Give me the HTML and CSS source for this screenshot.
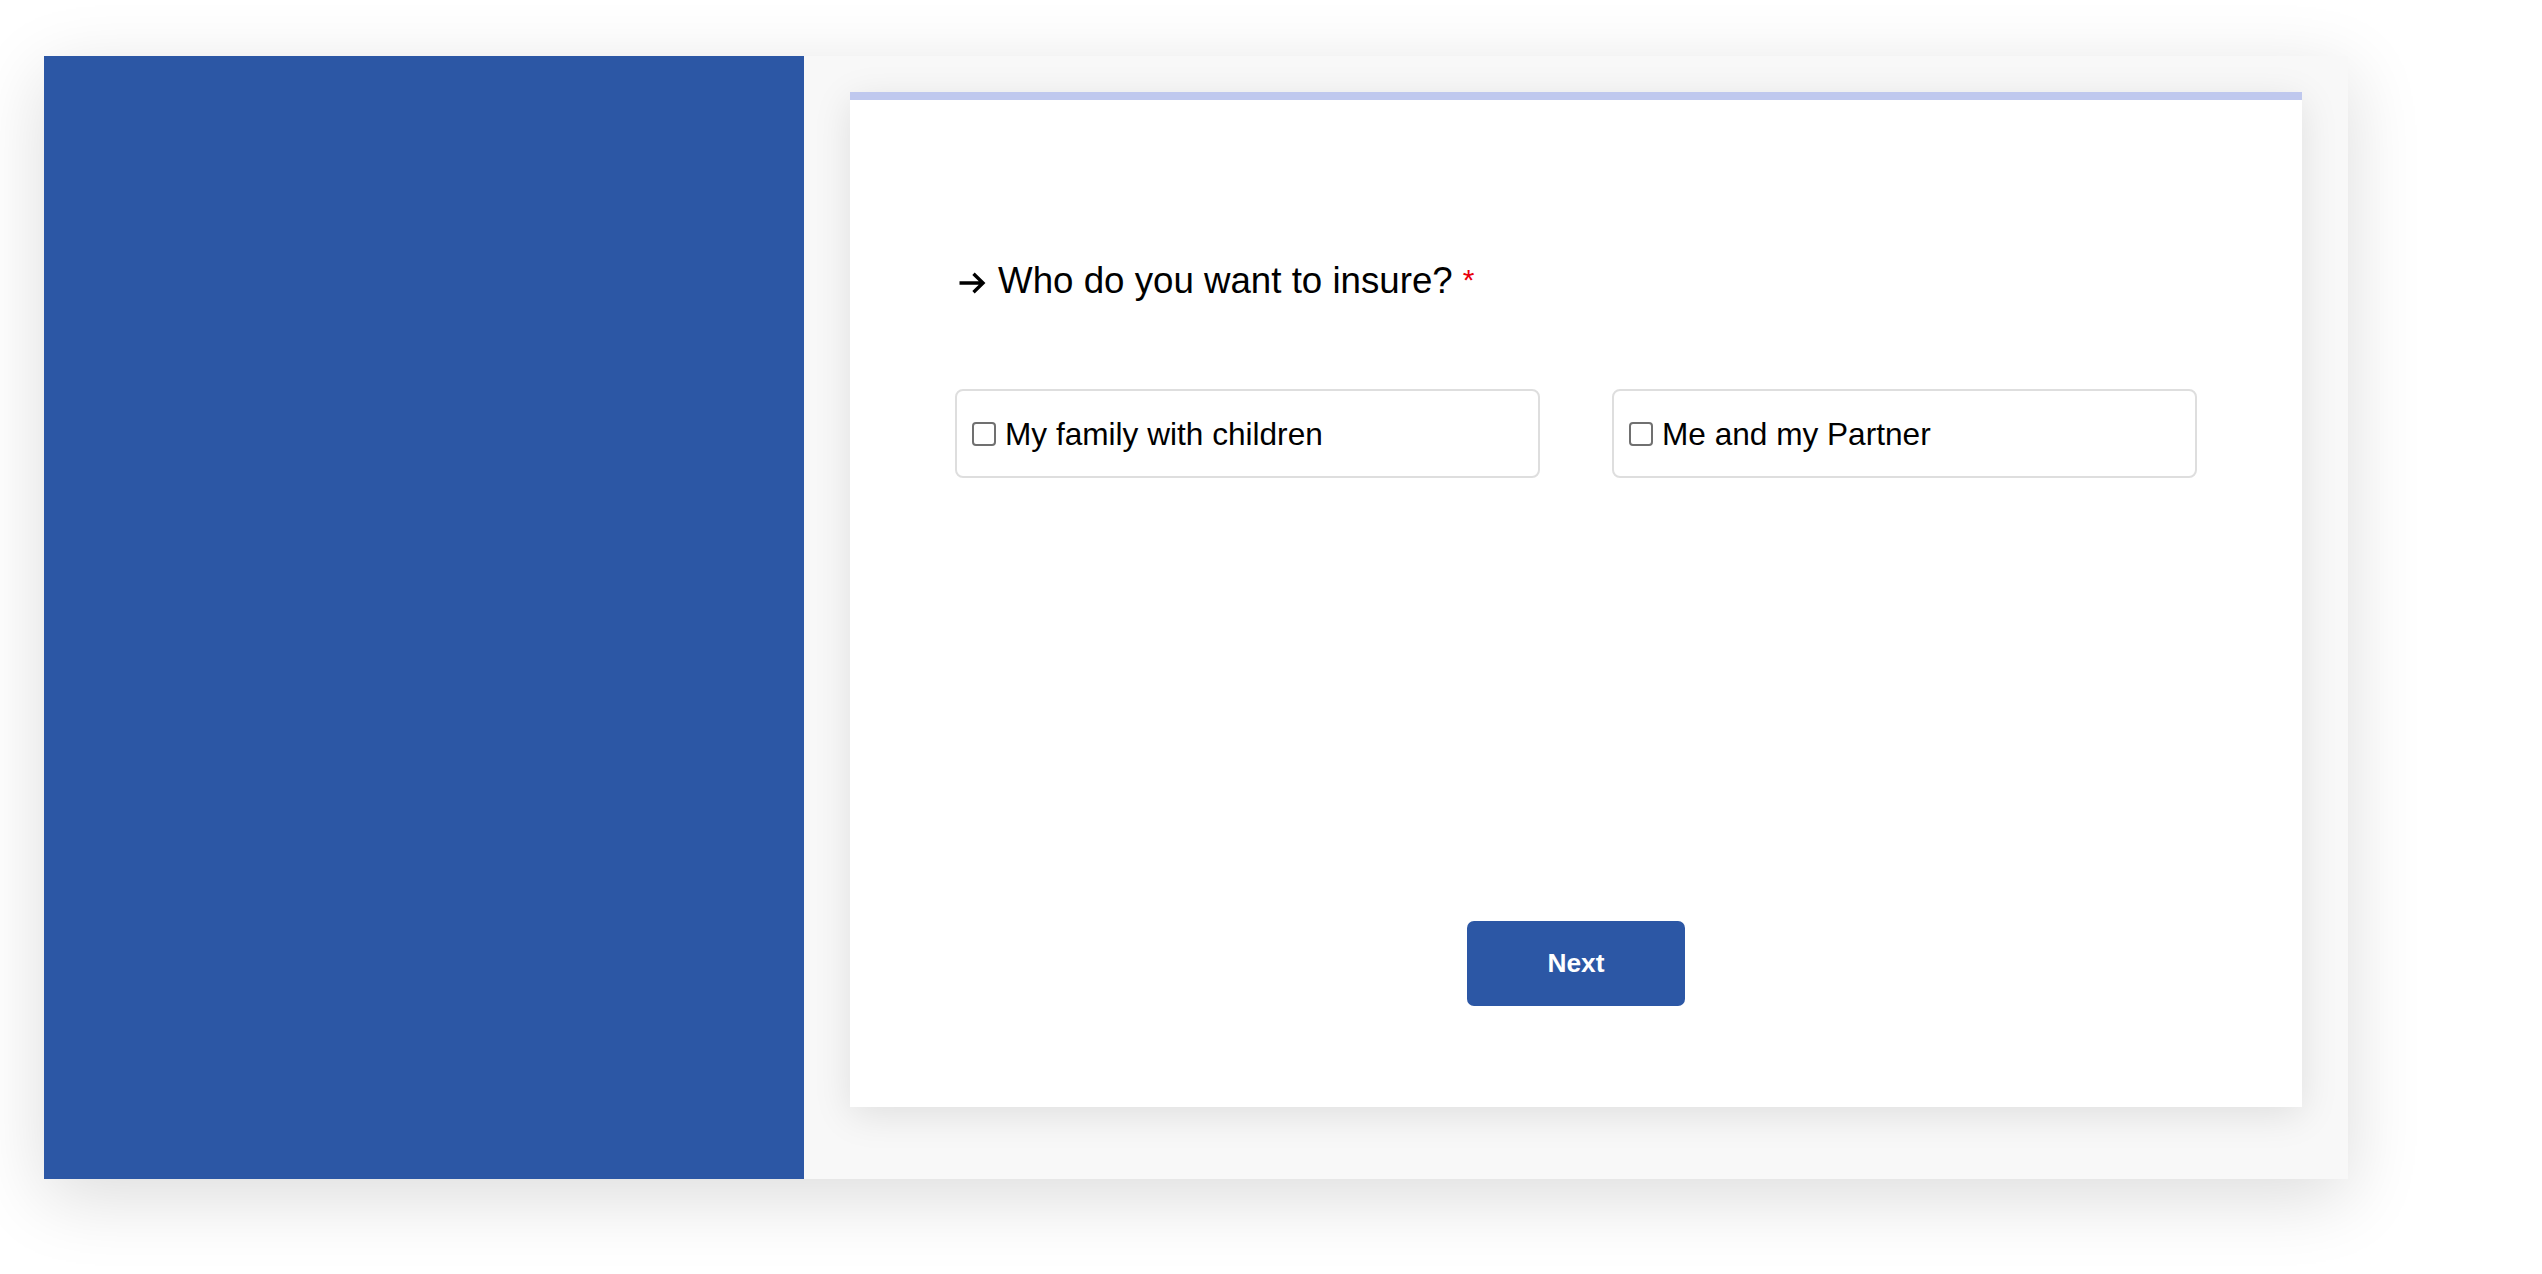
FILE: index.html
```html
<!DOCTYPE html>
<html lang="en">
<head>
<meta charset="utf-8">
<title>Who do you want to insure?</title>
<link rel="stylesheet" href="styles.css">
</head>
<body>
<div class="page">
  <div class="frame">
    <aside class="side"></aside>
    <main class="pane">
      <section class="card">
        <h1 class="question">
          <svg class="arrow" width="28" height="22" viewBox="0 0 28 22" aria-hidden="true">
            <path d="M1.5 11 H25 M15.5 1.8 L25 11 L15.5 20.2" fill="none" stroke="#000" stroke-width="3.4" stroke-linecap="butt" stroke-linejoin="miter"/>
          </svg>
          <span class="qtext">Who do you want to insure?</span>
          <span class="req">*</span>
        </h1>
        <div class="options">
          <label class="option"><input type="checkbox" class="check"><span>My family with children</span></label>
          <label class="option"><input type="checkbox" class="check"><span>Me and my Partner</span></label>
        </div>
        <button class="next" type="button">Next</button>
      </section>
    </main>
  </div>
</div>
</body>
</html>
```
FILE: styles.css
```css
html, body {
  margin: 0;
  padding: 0;
  background: #ffffff;
}

body {
  font-family: "Liberation Sans", Arial, Helvetica, sans-serif;
  color: #000;
}

.page {
  padding: 56px 0 95px 44px;
}

.frame {
  width: 2304px;
  height: 1123px;
  display: flex;
  box-shadow: 0 18px 70px rgba(0, 0, 0, 0.14);
}

.side {
  width: 760px;
  flex: none;
  background: #2c57a5;
}

.pane {
  flex: 1;
  display: flex;
  background: #f8f8f8;
  padding: 36px 46px 72px 46px;
}

.card {
  flex: 1;
  display: flex;
  flex-direction: column;
  background: #ffffff;
  border-top: 8px solid #bfc8ee;
  padding: 0 105px;
  box-shadow: 0 8px 36px rgba(0, 0, 0, 0.10);
}

.question {
  margin: 159px 0 0 3px;
  display: flex;
  align-items: center;
  font-weight: normal;
  font-size: 36.7px;
  line-height: 44px;
  height: 44px;
}

.arrow {
  flex: none;
  margin: 4px 12px 0 0;
}

.req {
  color: #e8000b;
  font-size: 30px;
  margin-left: 10px;
  align-self: flex-start;
  line-height: 30px;
  margin-top: 6px;
}

.options {
  margin-top: 86px;
  display: grid;
  grid-template-columns: 1fr 1fr;
  gap: 72px;
}

.option {
  height: 89px;
  box-sizing: border-box;
  border: 2px solid #dedede;
  border-radius: 8px;
  display: flex;
  align-items: center;
  padding-left: 15px;
  padding-top: 2px;
  font-size: 31.6px;
  cursor: pointer;
}

.check {
  appearance: none;
  -webkit-appearance: none;
  margin: 0 9px 2px 0;
  width: 24px;
  height: 24px;
  box-sizing: border-box;
  border: 2px solid #707070;
  border-radius: 4px;
  background: #fff;
  flex: none;
}

.next {
  margin: 443px auto 0;
  width: 218px;
  height: 85px;
  border: none;
  border-radius: 7px;
  background: #2c57a5;
  color: #ffffff;
  font-family: "Liberation Sans", Arial, Helvetica, sans-serif;
  font-weight: bold;
  font-size: 26.3px;
  cursor: pointer;
}
```
